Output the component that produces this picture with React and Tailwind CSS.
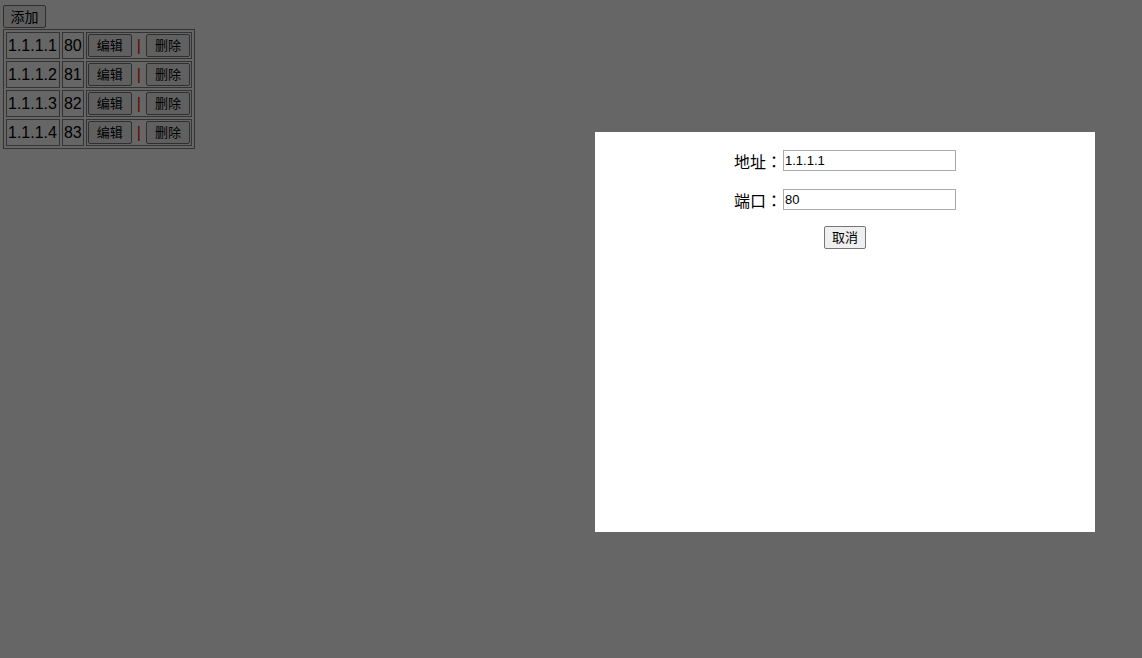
const rows = [
  { ip: "1.1.1.1", port: "80" },
  { ip: "1.1.1.2", port: "81" },
  { ip: "1.1.1.3", port: "82" },
  { ip: "1.1.1.4", port: "83" },
];

const btn =
  "inline-flex items-center justify-center bg-[#efefef] border border-[#767676] rounded-[2px] text-[13px] leading-none text-black";

export default function App() {
  return (
    <div className="relative h-[658px] w-full overflow-hidden bg-white text-black font-['Liberation_Sans','Noto_Sans_CJK_SC',sans-serif]">
      {/* page */}
      <div className="flex flex-col items-start pl-[3px] pt-[5px]">
        <button className={`${btn} h-[23px] w-[43px] text-[14px]`}>添加</button>
        <table className="mt-px border-separate border-spacing-[2px] border border-[#808080] leading-none">
          <tbody>
            {rows.map((r) => (
              <tr key={r.ip}>
                <td className="h-[27px] border border-[#808080] py-0 pl-px pr-[2px] text-[16px] leading-none align-middle">{r.ip}</td>
                <td className="h-[27px] border border-[#808080] px-px py-0 text-[16px] leading-none align-middle">{r.port}</td>
                <td className="h-[27px] border border-[#808080] p-px align-middle">
                  <div className="flex h-[23px] items-center">
                    <button className={`${btn} h-[23px] w-[44px]`}>编辑</button>
                    <span className="mx-[5px] text-[16px] leading-none text-[#ff0000]">|</span>
                    <button className={`${btn} h-[23px] w-[44px]`}>删除</button>
                  </div>
                </td>
              </tr>
            ))}
          </tbody>
        </table>
      </div>

      {/* overlay */}
      <div className="absolute inset-0 bg-black/60" />

      {/* dialog */}
      <div className="absolute left-[595px] top-[132px] flex h-[400px] w-[500px] flex-col items-center bg-white pt-[18px]">
        <div className="flex items-center">
          <span className="text-[16px] leading-none font-['Noto_Sans_CJK_TC',sans-serif]">地址：</span>
          <input
            defaultValue="1.1.1.1"
            className="ml-px h-[21px] w-[173px] border border-[#a9a9a9] px-px text-[13px] outline-none"
          />
        </div>
        <div className="mt-[18px] flex items-center">
          <span className="text-[16px] leading-none font-['Noto_Sans_CJK_TC',sans-serif]">端口：</span>
          <input
            defaultValue="80"
            className="ml-px h-[21px] w-[173px] border border-[#a9a9a9] px-px text-[13px] outline-none"
          />
        </div>
        <button className={`${btn} mt-[16px] h-[23px] w-[42px]`}>取消</button>
      </div>
    </div>
  );
}
